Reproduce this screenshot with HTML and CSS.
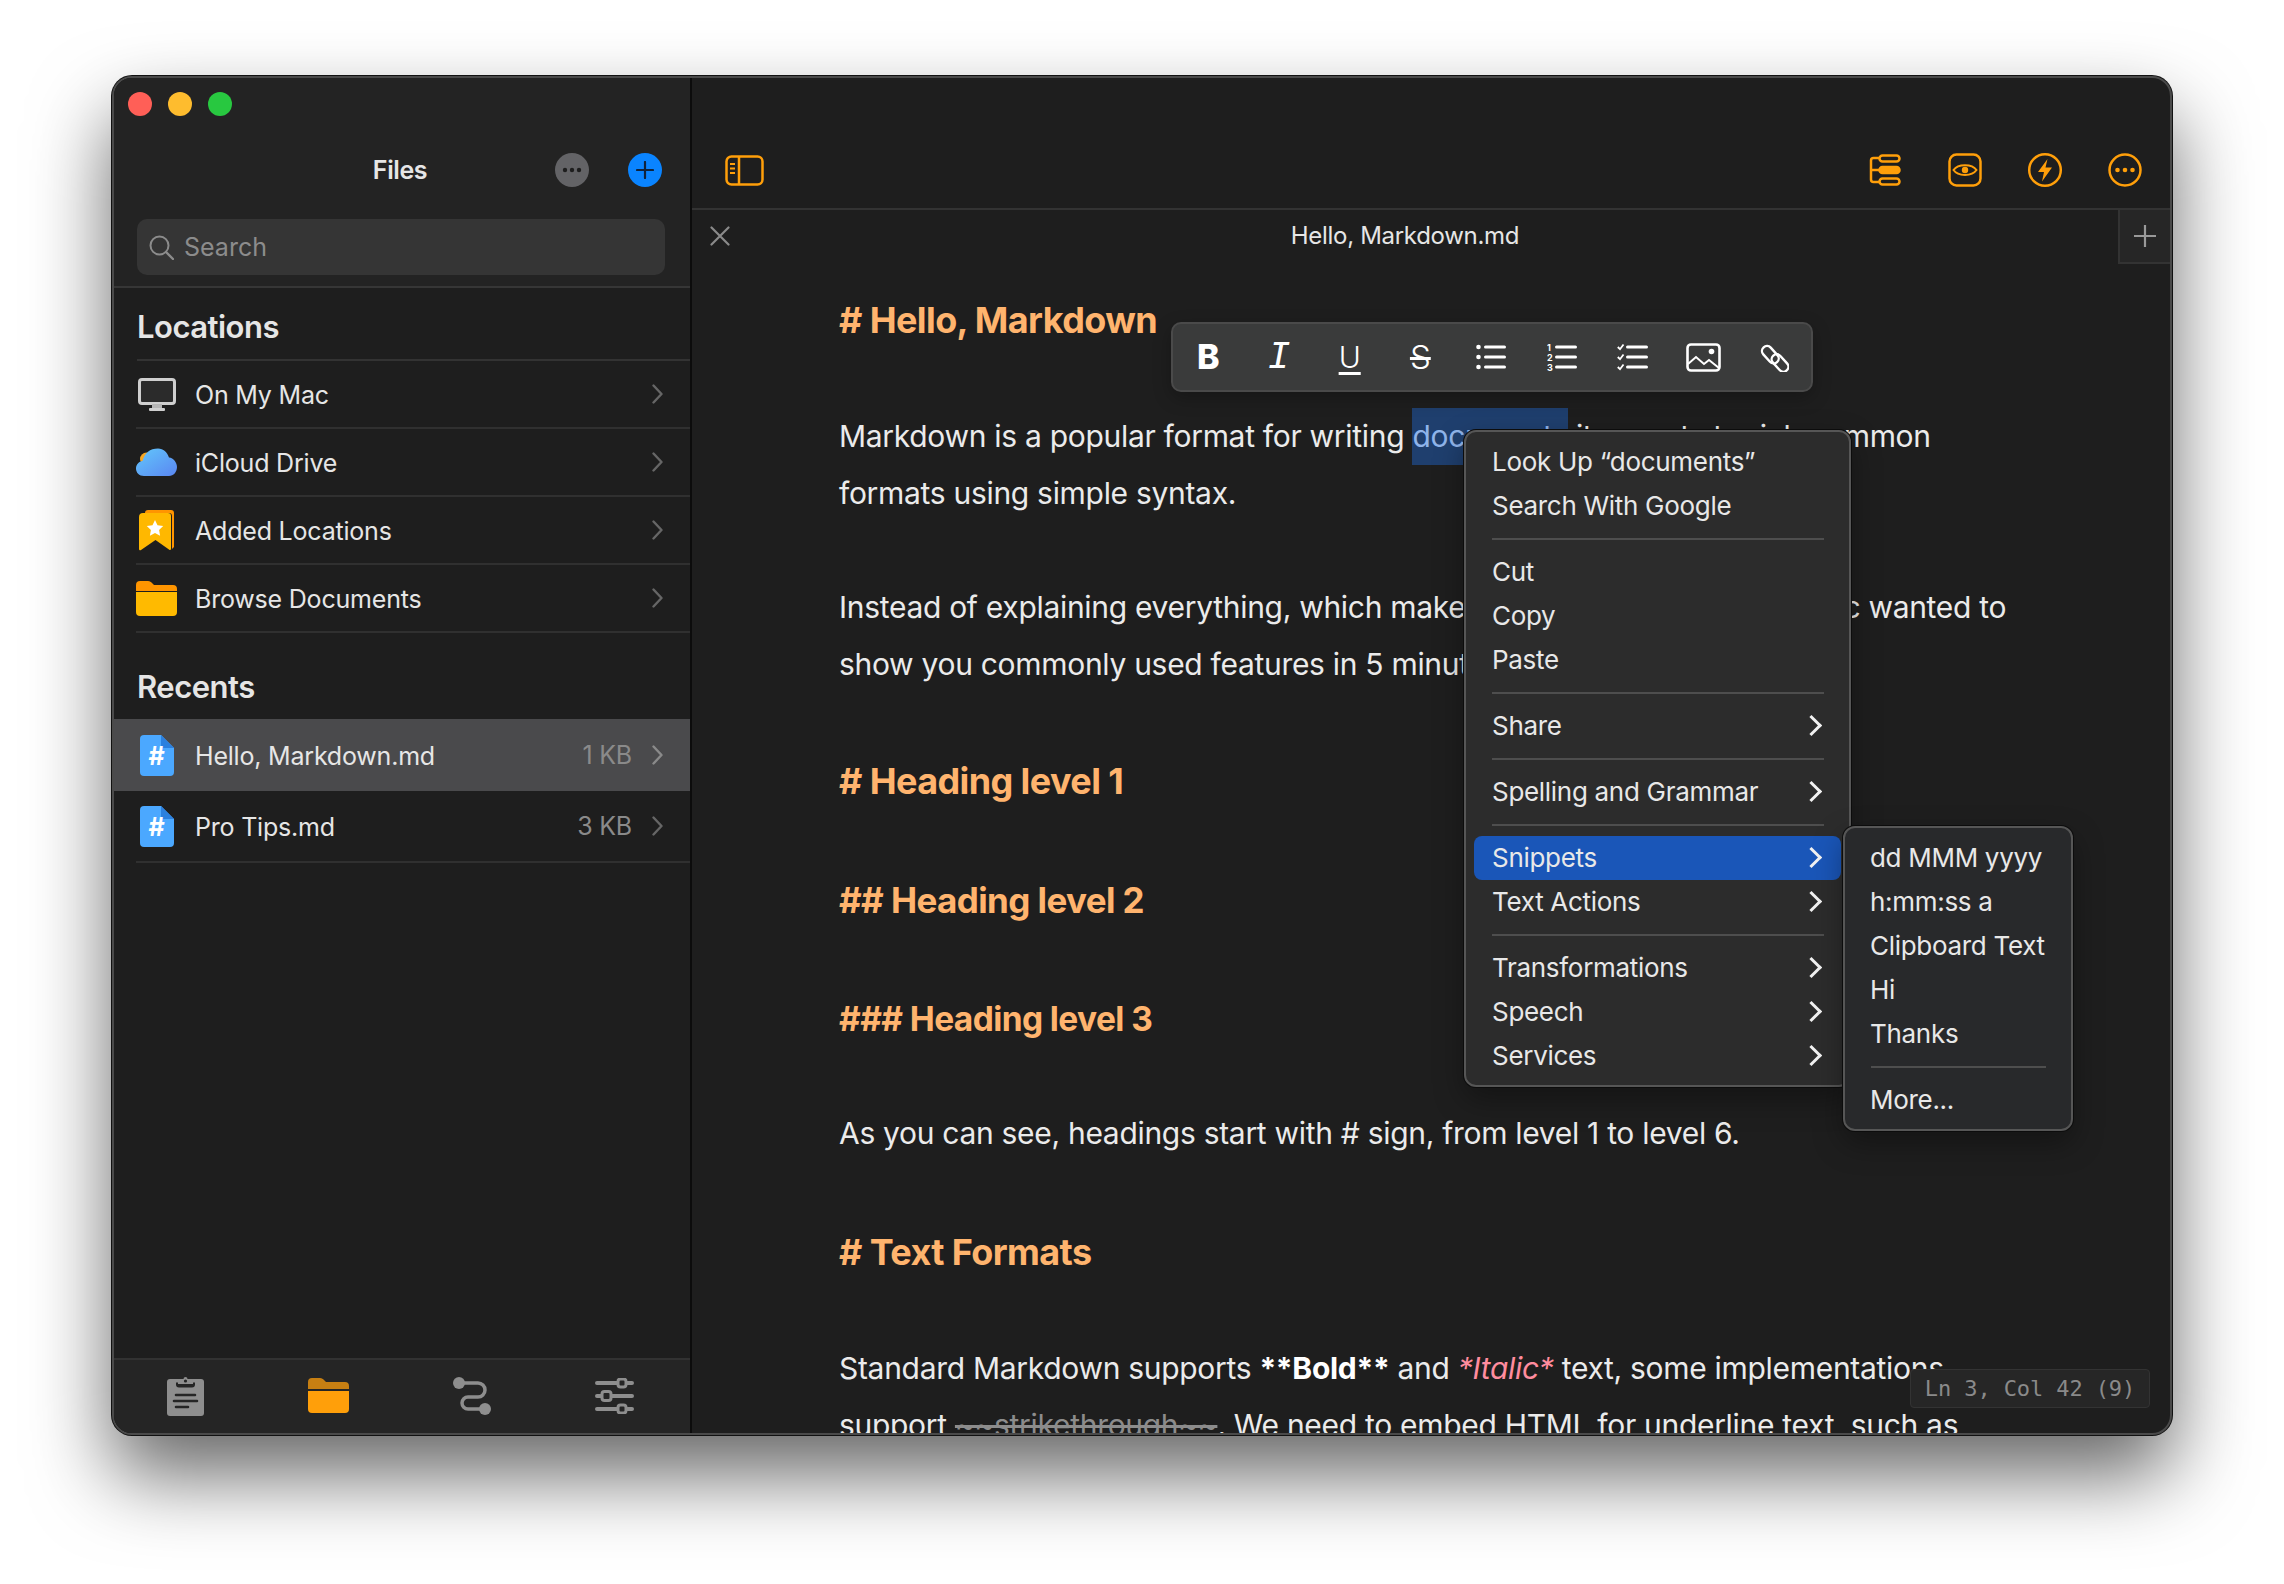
FILE: index.html
```html
<!DOCTYPE html>
<html>
<head>
    <meta charset="utf-8">
    <title>Hello, Markdown.md</title>
    <link rel="stylesheet" href="styles.css">
</head>
<body>
<div class="window">
    <div class="sidebar">
        <div class="side-top">
            <div class="lights">
                <span class="light red"></span>
                <span class="light yellow"></span>
                <span class="light green"></span>
            </div>
            <div class="side-title">
                <span></span>
                <span class="title-text">Files</span>
                <div class="title-btns">
                    <span class="round-btn gray">
                        <svg width="20" height="6" viewBox="0 0 20 6"><circle cx="3" cy="3" r="2.2" fill="#1e1e1e"/><circle cx="10" cy="3" r="2.2" fill="#1e1e1e"/><circle cx="17" cy="3" r="2.2" fill="#1e1e1e"/></svg>
                    </span>
                    <span class="round-btn blue">
                        <svg width="18" height="18" viewBox="0 0 18 18"><path d="M9 1v16M1 9h16" stroke="#10233c" stroke-width="2.2" stroke-linecap="round"/></svg>
                    </span>
                </div>
            </div>
            <div class="search">
                <svg width="25" height="25" viewBox="0 0 25 25" fill="none" stroke="#8c8c8c" stroke-width="2"><circle cx="10.5" cy="10.5" r="9"/><path d="M17 17l7 7" stroke-width="2.4" stroke-linecap="round"/></svg>
                <span>Search</span>
            </div>
        </div>

        <div class="side-head">Locations</div>
        <div class="rows">
            <div class="row">
                <span class="row-icon">
                    <svg width="38" height="33" viewBox="0 0 38 33"><rect x="1.5" y="1.5" width="35" height="24" rx="2.5" fill="#2b2b2b" stroke="#cfcfcf" stroke-width="3"/><rect x="14" y="26" width="10" height="4" fill="#b5b5b5"/><rect x="11" y="30" width="16" height="3" rx="1" fill="#cfcfcf"/></svg>
                </span>
                <span class="row-name">On My Mac</span>
                <svg class="chev" width="11" height="20" viewBox="0 0 11 20"><path d="M1.5 1.5L9.5 10L1.5 18.500" fill="none" stroke="#666" stroke-width="2.4" stroke-linecap="round" stroke-linejoin="round"/></svg>
            </div>
            <div class="row">
                <span class="row-icon">
                    <svg width="41" height="28" viewBox="0 0 41 28">
                        <defs><linearGradient id="cloud" x1="0" y1="0" x2="1" y2="1"><stop offset="0" stop-color="#62c8fb"/><stop offset="1" stop-color="#5a86f2"/></linearGradient></defs>
                        <circle cx="10.500" cy="11" r="6.500" fill="#f5a623"/>
                        <path d="M8 28C3 28 0 24.500 0 20.500C0 16.500 3 13.500 6.500 13C8.500 5 14 .5 22 .5C27.500 .5 31 4 33 9.500C37.500 10 41 14.500 41 19C41 24 37.500 28 33 28Z" fill="url(#cloud)"/>
                    </svg>
                </span>
                <span class="row-name">iCloud Drive</span>
                <svg class="chev" width="11" height="20" viewBox="0 0 11 20"><path d="M1.5 1.5L9.5 10L1.5 18.500" fill="none" stroke="#666" stroke-width="2.4" stroke-linecap="round" stroke-linejoin="round"/></svg>
            </div>
            <div class="row">
                <span class="row-icon">
                    <svg width="35" height="41" viewBox="0 0 35 41">
                        <path d="M6 3a3 3 0 0 1 3-3h23a3 3 0 0 1 3 3v34l-2 2V6a3 3 0 0 0-3-3H9z" fill="#ff9500"/>
                        <path d="M0 7a4 4 0 0 1 4-4h25a3 3 0 0 1 3 3v33a1 1 0 0 1-1.700.7L16.500 30 2 40a1.200 1.200 0 0 1-2-1z" fill="#ffb800"/>
                        <path d="M16 10l2.500 5.200 5.700.8-4.100 4 1 5.700-5.100-2.700-5.100 2.700 1-5.700-4.100-4 5.700-.8z" fill="#fff"/>
                    </svg>
                </span>
                <span class="row-name">Added Locations</span>
                <svg class="chev" width="11" height="20" viewBox="0 0 11 20"><path d="M1.5 1.5L9.5 10L1.5 18.500" fill="none" stroke="#666" stroke-width="2.4" stroke-linecap="round" stroke-linejoin="round"/></svg>
            </div>
            <div class="row">
                <span class="row-icon">
                    <svg width="41" height="35" viewBox="0 0 41 35">
                        <path d="M0 4a4 4 0 0 1 4-4h8c2 0 3 1 4 2l2 2h19a4 4 0 0 1 4 4v2H0z" fill="#ff9500"/>
                        <path d="M0 11h41v20a4 4 0 0 1-4 4H4a4 4 0 0 1-4-4z" fill="#ffba00"/>
                    </svg>
                </span>
                <span class="row-name">Browse Documents</span>
                <svg class="chev" width="11" height="20" viewBox="0 0 11 20"><path d="M1.5 1.5L9.5 10L1.5 18.500" fill="none" stroke="#666" stroke-width="2.4" stroke-linecap="round" stroke-linejoin="round"/></svg>
            </div>
        </div>

        <div class="side-head recents">Recents</div>
        <div class="row file-row selected">
            <span class="row-icon">
                <svg width="34" height="41" viewBox="0 0 34 41">
                    <path d="M4 0h17l13 13v24a4 4 0 0 1-4 4H4a4 4 0 0 1-4-4V4a4 4 0 0 1 4-4z" fill="#4ba8ff"/>
                    <path d="M21 0l13 13H24a3 3 0 0 1-3-3z" fill="#2b80df"/>
                    <text x="16.500" y="30" text-anchor="middle" class="file-hash">#</text>
                </svg>
            </span>
            <span class="row-name">Hello, Markdown.md</span>
            <span class="row-size">1 KB</span>
            <svg class="chev" width="11" height="20" viewBox="0 0 11 20"><path d="M1.5 1.5L9.5 10L1.5 18.500" fill="none" stroke="#8a8a8a" stroke-width="2.4" stroke-linecap="round" stroke-linejoin="round"/></svg>
        </div>
        <div class="row file-row">
            <span class="row-icon">
                <svg width="34" height="41" viewBox="0 0 34 41">
                    <path d="M4 0h17l13 13v24a4 4 0 0 1-4 4H4a4 4 0 0 1-4-4V4a4 4 0 0 1 4-4z" fill="#4ba8ff"/>
                    <path d="M21 0l13 13H24a3 3 0 0 1-3-3z" fill="#2b80df"/>
                    <text x="16.500" y="30" text-anchor="middle" class="file-hash">#</text>
                </svg>
            </span>
            <span class="row-name">Pro Tips.md</span>
            <span class="row-size">3 KB</span>
            <svg class="chev" width="11" height="20" viewBox="0 0 11 20"><path d="M1.5 1.5L9.5 10L1.5 18.500" fill="none" stroke="#666" stroke-width="2.4" stroke-linecap="round" stroke-linejoin="round"/></svg>
        </div>

        <div class="side-space"></div>
        <div class="side-bottom">
            <span class="tab-icon">
                <svg width="37" height="41" viewBox="0 0 37 41">
                    <path d="M3 4h31a3 3 0 0 1 3 3v31a3 3 0 0 1-3 3H3a3 3 0 0 1-3-3V7a3 3 0 0 1 3-3z" fill="#8e8e8e"/>
                    <path d="M9 7.500h19v2a3 3 0 0 1-3 3H12a3 3 0 0 1-3-3z" fill="#252525"/>
                    <path d="M11 9V7a3 3 0 0 1 3-3h2.500a2 2 0 0 1 4 0H23a3 3 0 0 1 3 3v2z" fill="#8e8e8e"/>
                    <circle cx="18.500" cy="6" r="1.600" fill="#252525"/>
                    <path d="M9 20h19M7 26h23M9 32h12" stroke="#252525" stroke-width="2.600" stroke-linecap="round"/>
                </svg>
            </span>
            <span class="tab-icon">
                <svg width="41" height="35" viewBox="0 0 41 35">
                    <path d="M0 4a4 4 0 0 1 4-4h8c2 0 3 1 4 2l2 2h19a4 4 0 0 1 4 4v3H0z" fill="#c77f12"/>
                    <path d="M0 13h41v18a4 4 0 0 1-4 4H4a4 4 0 0 1-4-4z" fill="#ff9f0a"/>
                </svg>
            </span>
            <span class="tab-icon">
                <svg width="38" height="38" viewBox="0 0 38 38" fill="none">
                    <circle cx="6" cy="6" r="6" fill="#8e8e8e"/>
                    <circle cx="32" cy="32" r="6" fill="#8e8e8e"/>
                    <path d="M8 6h17a7 7 0 0 1 7 7v0a7 7 0 0 1-7 7h-10a6 6 0 0 0-6 6v0a6 6 0 0 0 6 6h15" stroke="#8e8e8e" stroke-width="3.500"/>
                </svg>
            </span>
            <span class="tab-icon">
                <svg width="39" height="36" viewBox="0 0 39 36" fill="none" stroke-linecap="round">
                    <path d="M2 5h35M2 18h35M2 31h35" stroke="#8e8e8e" stroke-width="4"/>
                    <rect x="23" y="1" width="8" height="8" rx="2.500" fill="#252525" stroke="#8e8e8e" stroke-width="3"/>
                    <rect x="7" y="13.500" width="9" height="9" rx="2.500" fill="#252525" stroke="#8e8e8e" stroke-width="3"/>
                    <rect x="23" y="27" width="8" height="8" rx="2.500" fill="#252525" stroke="#8e8e8e" stroke-width="3"/>
                </svg>
            </span>
        </div>
    </div>

    <div class="main">
        <div class="toolbar">
            <svg class="toggle" width="39" height="31" viewBox="0 0 39 31" fill="none" stroke="#ff9f0a" stroke-width="2.500">
                <rect x="1.500" y="1.500" width="36" height="28" rx="5"/>
                <path d="M14 1.500v28"/>
                <path d="M5 9h5M5 13.500h5M5 18h5" stroke-width="2"/>
            </svg>
            <div class="tool-right">
                <svg class="tool-outline" width="32" height="32" viewBox="0 0 32 32" fill="none" stroke="#ff9f0a" stroke-width="2.500">
                    <path d="M11 4H4.500a2.500 2.500 0 0 0-2.500 2.500v19A2.500 2.500 0 0 0 4.500 28H11M2 16h9"/>
                    <rect x="10.500" y="1.500" width="20" height="6" rx="3"/>
                    <rect x="10.500" y="13" width="20" height="6" rx="3" fill="#ff9f0a"/>
                    <rect x="10.500" y="24.500" width="20" height="6" rx="3"/>
                </svg>
                <svg width="34" height="34" viewBox="0 0 34 34" fill="none" stroke="#ff9f0a">
                    <rect x="1.500" y="1.500" width="31" height="31" rx="7" stroke-width="2.500"/>
                    <path d="M5.500 17C10 10.500 24 10.500 28.500 17C24 23.500 10 23.500 5.500 17Z" stroke-width="2"/>
                    <circle cx="17" cy="17" r="3.200" fill="#ff9f0a" stroke="none"/>
                </svg>
                <svg width="36" height="36" viewBox="0 0 36 36" fill="none" stroke="#ff9f0a">
                    <circle cx="18" cy="18" r="15.800" stroke-width="2.500"/>
                    <path d="M20.500 7L11 20h6l-2 9.500L25 15.500h-6.500z" fill="#ff9f0a" stroke="none"/>
                </svg>
                <svg width="34" height="34" viewBox="0 0 34 34" fill="none" stroke="#ff9f0a">
                    <circle cx="17" cy="17" r="15.500" stroke-width="2.500"/>
                    <circle cx="9.500" cy="17" r="2.300" fill="#ff9f0a" stroke="none"/>
                    <circle cx="17" cy="17" r="2.300" fill="#ff9f0a" stroke="none"/>
                    <circle cx="24.500" cy="17" r="2.300" fill="#ff9f0a" stroke="none"/>
                </svg>
            </div>
        </div>

        <div class="tabbar">
            <svg class="tab-close" width="20" height="20" viewBox="0 0 20 20"><path d="M1.500 1.500l17 17M18.500 1.500l-17 17" stroke="#8a8a8a" stroke-width="2.200" stroke-linecap="round"/></svg>
            <div class="tab-title">Hello, Markdown.md</div>
            <div class="tab-add">
                <svg width="22" height="22" viewBox="0 0 22 22"><path d="M11 0v22M0 11h22" stroke="#999" stroke-width="2.200"/></svg>
            </div>
        </div>

        <div class="editor">
            <div class="h">#&nbsp;Hello, Markdown</div>
            <p>Markdown is a popular format for writing <span class="sel">documents</span> it exports to rich common<br>formats using simple syntax.</p>
            <p>Instead of explaining everything, which makes it's long and tedious, Basic wanted to<br>show you commonly used features in 5 minutes.</p>
            <div class="h">#&nbsp;Heading level 1</div>
            <div class="h h2">##&nbsp;Heading level 2</div>
            <div class="h h3">###&nbsp;Heading level 3</div>
            <p class="after-h3">As you can see, headings start with # sign, from level 1 to level 6.</p>
            <div class="h">#&nbsp;Text Formats</div>
            <p>Standard Markdown supports <b>**Bold**</b> and <i>*Italic*</i> text, some implementations<br>support <s>~~strikethrough~~</s>. We need to embed HTML for underline text, such as</p>
            <div class="status">Ln 3, Col 42 (9)</div>
        </div>
    </div>

    <div class="format-bar">
        <span class="fmt fmt-b">B</span>
        <span class="fmt fmt-i">I</span>
        <span class="fmt fmt-u">U</span>
        <span class="fmt fmt-s">S</span>
        <span class="fmt">
            <svg width="30" height="26" viewBox="0 0 30 26" fill="#fff"><circle cx="2.500" cy="3" r="2.300"/><circle cx="2.500" cy="13" r="2.300"/><circle cx="2.500" cy="23" r="2.300"/><rect x="8" y="1.500" width="22" height="3" rx="1.500"/><rect x="8" y="11.500" width="22" height="3" rx="1.500"/><rect x="8" y="21.500" width="22" height="3" rx="1.500"/></svg>
        </span>
        <span class="fmt">
            <svg width="30" height="28" viewBox="0 0 30 28" fill="#fff"><text x="0" y="8" class="num">1</text><text x="0" y="18" class="num">2</text><text x="0" y="28" class="num">3</text><rect x="8" y="2.500" width="22" height="3" rx="1.500"/><rect x="8" y="12.500" width="22" height="3" rx="1.500"/><rect x="8" y="22.500" width="22" height="3" rx="1.500"/></svg>
        </span>
        <span class="fmt">
            <svg width="31" height="28" viewBox="0 0 31 28" fill="#fff"><path d="M.8 4l2.200 2.200L6.500 1.500M.8 14l2.200 2.200 3.500-4.700M.8 24l2.200 2.200 3.500-4.700" fill="none" stroke="#fff" stroke-width="1.800"/><rect x="9" y="2.500" width="22" height="3" rx="1.500"/><rect x="9" y="12.500" width="22" height="3" rx="1.500"/><rect x="9" y="22.500" width="22" height="3" rx="1.500"/></svg>
        </span>
        <span class="fmt">
            <svg width="35" height="29" viewBox="0 0 35 29" fill="none" stroke="#fff"><rect x="1.500" y="1.500" width="32" height="26" rx="3.500" stroke-width="2.600"/><path d="M2 21l8-7 8 7 5-4 10 8" stroke-width="2"/><circle cx="25.500" cy="8.500" r="2.800" fill="#fff" stroke="none"/></svg>
        </span>
        <span class="fmt">
            <svg width="30" height="30" viewBox="0 0 30 30" fill="none" stroke="#fff" stroke-width="2.400"><rect x="-5" y="-5" width="20" height="10" rx="5" transform="translate(8 9) rotate(48)"/><rect x="-10" y="-5" width="20" height="10" rx="5" transform="translate(21 21) rotate(48)"/></svg>
        </span>
    </div>

    <div class="menu">
        <div class="item">Look Up “documents”</div>
        <div class="item">Search With Google</div>
        <div class="sep"></div>
        <div class="item">Cut</div>
        <div class="item">Copy</div>
        <div class="item">Paste</div>
        <div class="sep"></div>
        <div class="item more">Share</div>
        <div class="sep"></div>
        <div class="item more">Spelling and Grammar</div>
        <div class="sep"></div>
        <div class="item more active">Snippets</div>
        <div class="item more">Text Actions</div>
        <div class="sep"></div>
        <div class="item more">Transformations</div>
        <div class="item more">Speech</div>
        <div class="item more">Services</div>
    </div>

    <div class="menu submenu">
        <div class="item">dd MMM yyyy</div>
        <div class="item">h:mm:ss a</div>
        <div class="item">Clipboard Text</div>
        <div class="item">Hi</div>
        <div class="item">Thanks</div>
        <div class="sep"></div>
        <div class="item">More...</div>
    </div>
</div>
</body>
</html>
```

FILE: styles.css
```css
html {
    background: white;
}

body {
    margin: 0;
    height: 1584px;
    padding: 76px 0 0 112px;
    box-sizing: border-box;
    overflow: hidden;
    font-family: "Inter", "Liberation Sans", sans-serif;
    color: #e6e6e6;
}

/* window */
.window {
    position: relative;
    display: flex;
    width: 2060px;
    height: 1359px;
    box-sizing: border-box;
    border: 2px solid #4a4a4a;
    border-radius: 20px;
    background: #1e1e1e;
    box-shadow: 0 0 0 1px #111, 0 40px 80px rgba(0, 0, 0, 0.6);
}

/* sidebar */
.sidebar {
    display: flex;
    flex-direction: column;
    flex-shrink: 0;
    width: 576px;
    border-right: 2px solid #0c0c0c;
    border-radius: 18px 0 0 18px;
    overflow: hidden;
    background: #1e1e1e;
}

.side-top {
    height: 210px;
    box-sizing: border-box;
    border-bottom: 2px solid #363636;
    background: #232323;
}

.lights {
    display: flex;
    gap: 16px;
    padding: 14px 0 0 14px;
}

.light {
    width: 24px;
    height: 24px;
    border-radius: 50%;
}

.red {
    background: #ff5f57;
}

.yellow {
    background: #febc2e;
}

.green {
    background: #28c840;
}

.side-title {
    display: grid;
    grid-template-columns: 1fr auto 1fr;
    align-items: center;
    height: 40px;
    margin-top: 34px;
    padding: 0 28px 0 24px;
}

.title-text {
    font-size: 25px;
    font-weight: 600;
    letter-spacing: -0.4px;
}

.title-btns {
    display: flex;
    justify-content: flex-end;
    gap: 39px;
}

.round-btn {
    display: flex;
    align-items: center;
    justify-content: center;
    width: 34px;
    height: 34px;
    border-radius: 50%;
}

.gray {
    background: #636366;
}

.blue {
    background: #0a84ff;
}

.search {
    display: flex;
    align-items: center;
    gap: 10px;
    height: 56px;
    margin: 29px 25px 0 23px;
    padding-left: 12px;
    border-radius: 10px;
    background: #353535;
    font-size: 25px;
    color: #8c8c8c;
}

.side-head {
    height: 40px;
    padding: 19px 0 12px 23px;
    line-height: 40px;
    font-size: 31px;
    font-weight: 600;
    letter-spacing: -0.5px;
}

.recents {
    padding-top: 34px;
}

.rows {
    margin-left: 23px;
    border-top: 2px solid #333;
}

.row {
    display: flex;
    align-items: center;
    height: 68px;
    box-sizing: border-box;
    padding-right: 27px;
    border-bottom: 2px solid #303030;
    font-size: 25px;
    letter-spacing: -0.2px;
    margin-left: -1px;
}

.row-icon {
    display: flex;
    align-items: center;
    justify-content: center;
    width: 41px;
    margin-right: 18px;
}

.row-name {
    flex: 1;
    padding-top: 1px;
}

.row-size {
    margin-right: 20px;
    color: #8a8a8a;
}

.file-row {
    height: 72px;
    margin-left: 22px;
}

.file-row.selected {
    margin-left: 0;
    padding-left: 22px;
    border-bottom: none;
    background: #4a4a4c;
}

.file-hash {
    font-size: 25px;
    font-weight: 700;
    fill: #fff;
}

.side-space {
    flex: 1;
}

.side-bottom {
    display: grid;
    grid-template-columns: repeat(4, 1fr);
    align-items: center;
    height: 75px;
    box-sizing: border-box;
    padding: 0 4px 2px 0;
    border-top: 2px solid #323232;
    background: #252525;
}

.tab-icon {
    display: flex;
    justify-content: center;
}

/* main area */
.main {
    display: flex;
    flex: 1;
    flex-direction: column;
    min-width: 0;
    border-radius: 0 18px 18px 0;
    overflow: hidden;
}

.toolbar {
    display: flex;
    align-items: center;
    justify-content: space-between;
    height: 132px;
    box-sizing: border-box;
    padding: 54px 28px 0 33px;
    border-bottom: 2px solid #333;
}

.tool-right {
    display: flex;
    align-items: center;
    gap: 45px;
}

.tool-outline {
    margin-right: 2px;
}

.tabbar {
    position: relative;
    display: flex;
    height: 54px;
    flex-shrink: 0;
}

.tab-close {
    position: absolute;
    left: 18px;
    top: 16px;
}

.tab-title {
    flex: 1;
    line-height: 52px;
    text-align: center;
    font-size: 24px;
    letter-spacing: -0.3px;
}

.tab-add {
    display: flex;
    align-items: center;
    justify-content: center;
    width: 50px;
    border-left: 2px solid #333;
    border-bottom: 2px solid #333;
    background: #262626;
}

.editor {
    position: relative;
    flex: 1;
    padding: 25px 0 0 147px;
    overflow: hidden;
    white-space: nowrap;
}

.editor p {
    margin: 57px 0 0;
    line-height: 57px;
    font-size: 30px;
    letter-spacing: -0.3px;
    color: #ebebeb;
}

.editor p.after-h3 {
    margin: 55px 0 59px;
}

.h {
    margin-top: 57px;
    line-height: 62px;
    font-size: 36px;
    font-weight: 700;
    letter-spacing: -0.6px;
    color: #ffb46e;
}

.h:first-child {
    margin-top: 0;
}

.h2 {
    font-size: 35px;
}

.h3 {
    font-size: 33.5px;
}

.sel {
    display: inline-block;
    background: #1f3f6e;
    color: #8fb4ea;
}

.editor b {
    color: #fff;
}

.editor i {
    color: #ff8c9e;
}

.editor s {
    color: #8c8c8c;
}

.status {
    position: absolute;
    right: 20px;
    bottom: 25px;
    width: 240px;
    height: 39px;
    box-sizing: border-box;
    border: 1px solid #333;
    border-radius: 4px;
    background: #262626;
    line-height: 37px;
    text-align: center;
    font-family: "DejaVu Sans Mono", monospace;
    font-size: 22px;
    letter-spacing: -0.1px;
    color: #8a8a8a;
}

/* floating format bar */
.format-bar {
    position: absolute;
    left: 1057px;
    top: 244px;
    display: flex;
    width: 642px;
    height: 70px;
    box-sizing: border-box;
    padding-right: 2px;
    border: 2px solid #4a4a4a;
    border-radius: 10px;
    background: #3a3b3b;
    box-shadow: 0 6px 18px rgba(0, 0, 0, 0.25);
}

.fmt {
    display: flex;
    flex: 1;
    align-items: center;
    justify-content: center;
    color: #fff;
    font-size: 34px;
    line-height: 1;
}

.fmt-b {
    font-weight: 800;
}

.fmt-i {
    padding-top: 2px;
    font-family: "Liberation Mono", monospace;
    font-style: italic;
    font-size: 38px;
}

.fmt-u {
    font-size: 30px;
    font-weight: 300;
    text-decoration: underline;
    text-underline-offset: 4px;
    text-decoration-thickness: 3px;
}

.fmt-s {
    font-size: 33px;
    font-weight: 300;
    text-decoration: line-through;
    text-decoration-thickness: 3px;
}

.num {
    font-size: 9px;
    font-weight: 700;
    fill: #fff;
}

/* context menus */
.menu {
    position: absolute;
    left: 1350px;
    top: 352px;
    width: 387px;
    height: 657px;
    box-sizing: border-box;
    padding-top: 8px;
    border: 2px solid #565656;
    border-radius: 12px;
    background: #2c2c2c;
    box-shadow: 0 0 0 1px #0c0c0c, 0 12px 30px rgba(0, 0, 0, 0.35);
}

.submenu {
    left: 1729px;
    top: 748px;
    width: 230px;
    height: 305px;
    padding-top: 8px;
    background: #28292b;
}

.item {
    display: flex;
    align-items: center;
    justify-content: space-between;
    height: 44px;
    box-sizing: border-box;
    margin: 0 8px;
    padding: 0 20px 2px 18px;
    border-radius: 8px;
    font-size: 26px;
    letter-spacing: -0.3px;
    color: #e8e8e8;
    white-space: nowrap;
}

.submenu .item {
    margin: 0;
    padding: 0 0 2px 25px;
}

.item.active {
    background: #1a56b8;
}

.more::after {
    content: "";
    width: 12px;
    height: 12px;
    margin-right: 2px;
    border-top: 3px solid #f2f2f2;
    border-right: 3px solid #f2f2f2;
    transform: rotate(45deg);
}

.sep {
    height: 2px;
    margin: 10px 25px 10px 26px;
    background: #4e4e4e;
}
```
